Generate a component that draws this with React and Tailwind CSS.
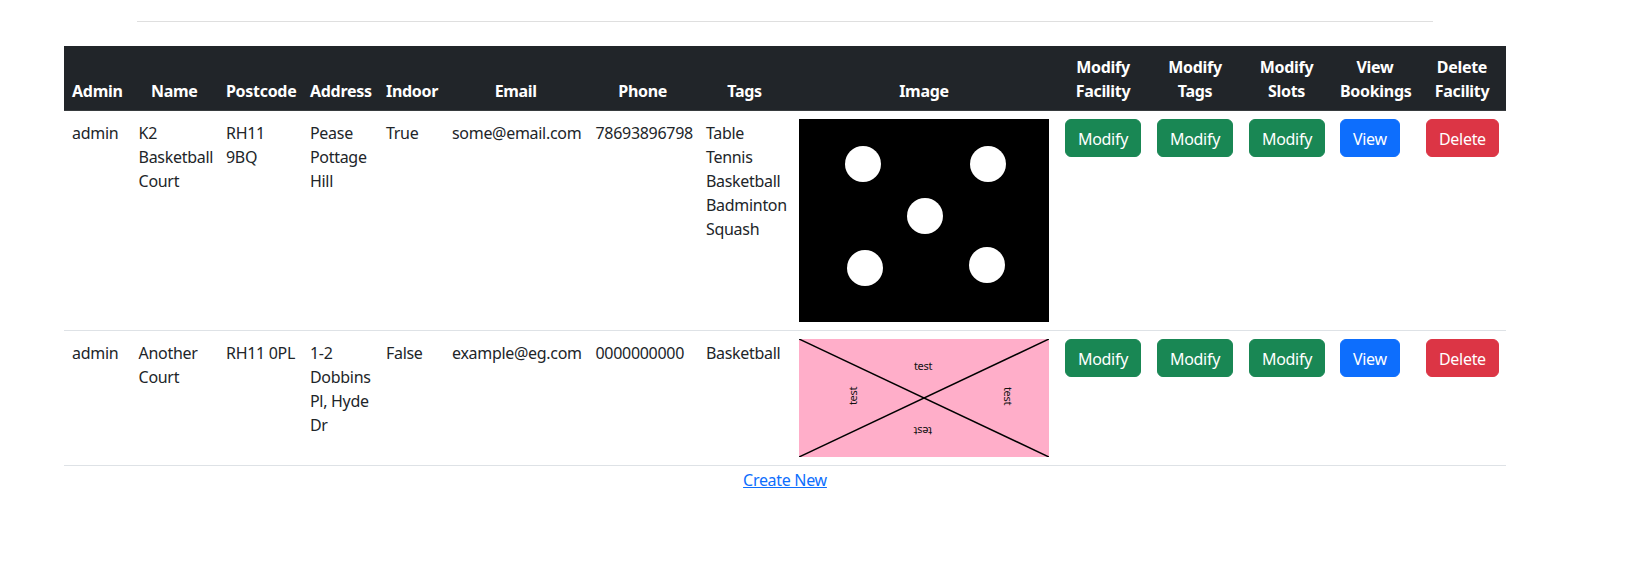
import React from "react";

const cols = [66.6, 87.4, 84, 76, 66, 143.5, 110.5, 93, 266, 92, 92, 91, 86, 88];

function DotsImage() {
  return (
    <svg width="250" height="203" viewBox="0 0 250 203" className="block">
      <rect width="250" height="203" fill="#000" />
      <circle cx="64" cy="45" r="18" fill="#fff" />
      <circle cx="189" cy="45" r="18" fill="#fff" />
      <circle cx="126" cy="97" r="18" fill="#fff" />
      <circle cx="66" cy="149" r="18" fill="#fff" />
      <circle cx="188" cy="146" r="18" fill="#fff" />
    </svg>
  );
}

function TestImage() {
  const t = { fontSize: 11, fontFamily: "'Noto Sans', sans-serif", fill: "#111" };
  return (
    <svg width="250" height="118" viewBox="0 0 250 118" className="block">
      <rect width="250" height="118" fill="#ffaec9" />
      <line x1="0" y1="0" x2="250" y2="118" stroke="#000" strokeWidth="1.5" />
      <line x1="250" y1="0" x2="0" y2="118" stroke="#000" strokeWidth="1.5" />
      <text x="124" y="26" textAnchor="middle" dominantBaseline="central" {...t}>test</text>
      <text x="53" y="57" textAnchor="middle" dominantBaseline="central" transform="rotate(-90 53 57)" {...t}>test</text>
      <text x="209" y="57" textAnchor="middle" dominantBaseline="central" transform="rotate(90 209 57)" {...t}>test</text>
      <text x="124" y="92" textAnchor="middle" dominantBaseline="central" transform="rotate(180 124 92)" {...t}>test</text>
    </svg>
  );
}

function Lines({ lines }) {
  return (
    <>
      {lines.map((l, i) => (
        <span key={i} className="block whitespace-nowrap">{l}</span>
      ))}
    </>
  );
}

function Btn({ color, children }) {
  const cls =
    color === "green"
      ? "bg-[#198754] border-[#198754]"
      : color === "blue"
      ? "bg-[#0d6efd] border-[#0d6efd]"
      : "bg-[#dc3545] border-[#dc3545]";
  return (
    <button className={`inline-block rounded-md border px-3 pt-[7px] pb-[5px] text-base leading-6 tracking-[-0.3px] text-white ${cls}`}>
      {children}
    </button>
  );
}

const rows = [
  {
    admin: "admin",
    name: ["K2", "Basketball", "Court"],
    postcode: ["RH11", "9BQ"],
    address: ["Pease", "Pottage", "Hill"],
    indoor: "True",
    email: "some@email.com",
    phone: "78693896798",
    tags: ["Table", "Tennis", "Basketball", "Badminton", "Squash"],
    img: <DotsImage />,
  },
  {
    admin: "admin",
    name: ["Another", "Court"],
    postcode: ["RH11 0PL"],
    address: ["1-2", "Dobbins", "Pl, Hyde", "Dr"],
    indoor: "False",
    email: "example@eg.com",
    phone: "0000000000",
    tags: ["Basketball"],
    img: <TestImage />,
  },
];

const headers = [
  ["Admin"],
  ["Name"],
  ["Postcode"],
  ["Address"],
  ["Indoor"],
  ["Email"],
  ["Phone"],
  ["Tags"],
  ["Image"],
  ["Modify", "Facility"],
  ["Modify", "Tags"],
  ["Modify", "Slots"],
  ["View", "Bookings"],
  ["Delete", "Facility"],
];

const td = "px-2 pt-[10px] pb-2 align-top";
const tdBox = "p-2 align-top";

export default function App() {
  return (
    <div
      className="min-h-screen bg-white text-base leading-6 tracking-[-0.3px] text-[#212529]"
      style={{ fontFamily: "'Noto Sans', sans-serif" }}
    >
      <div className="flex w-[1570px] flex-col items-center pt-[21px]">
        <div className="w-[1296px] border-t border-[#dfdfdf]" />
        <table className="mt-[24px] w-[1442px] table-fixed border-collapse">
          <colgroup>
            {cols.map((w, i) => (
              <col key={i} style={{ width: w }} />
            ))}
          </colgroup>
          <thead>
            <tr className="bg-[#212529] text-white">
              {headers.map((h, i) => (
                <th key={i} className="border-b border-[#373b3e] px-2 pt-[9px] pb-[7px] text-center align-bottom font-bold">
                  <Lines lines={h} />
                </th>
              ))}
            </tr>
          </thead>
          <tbody>
            {rows.map((r, i) => (
              <tr key={i} className="border-b border-[#dee2e6]">
                <td className={td}>{r.admin}</td>
                <td className={td}><Lines lines={r.name} /></td>
                <td className={td}><Lines lines={r.postcode} /></td>
                <td className={td}><Lines lines={r.address} /></td>
                <td className={td}>{r.indoor}</td>
                <td className={`whitespace-nowrap ${td}`}>{r.email}</td>
                <td className={`whitespace-nowrap ${td}`}>{r.phone}</td>
                <td className={td}><Lines lines={r.tags} /></td>
                <td className={tdBox}>{r.img}</td>
                <td className={tdBox}><Btn color="green">Modify</Btn></td>
                <td className={tdBox}><Btn color="green">Modify</Btn></td>
                <td className={tdBox}><Btn color="green">Modify</Btn></td>
                <td className={tdBox}><Btn color="blue">View</Btn></td>
                <td className={tdBox}><Btn color="red">Delete</Btn></td>
              </tr>
            ))}
          </tbody>
        </table>
        <a href="#" className="mt-[2px] text-[#0d6efd] underline">Create New</a>
      </div>
    </div>
  );
}
